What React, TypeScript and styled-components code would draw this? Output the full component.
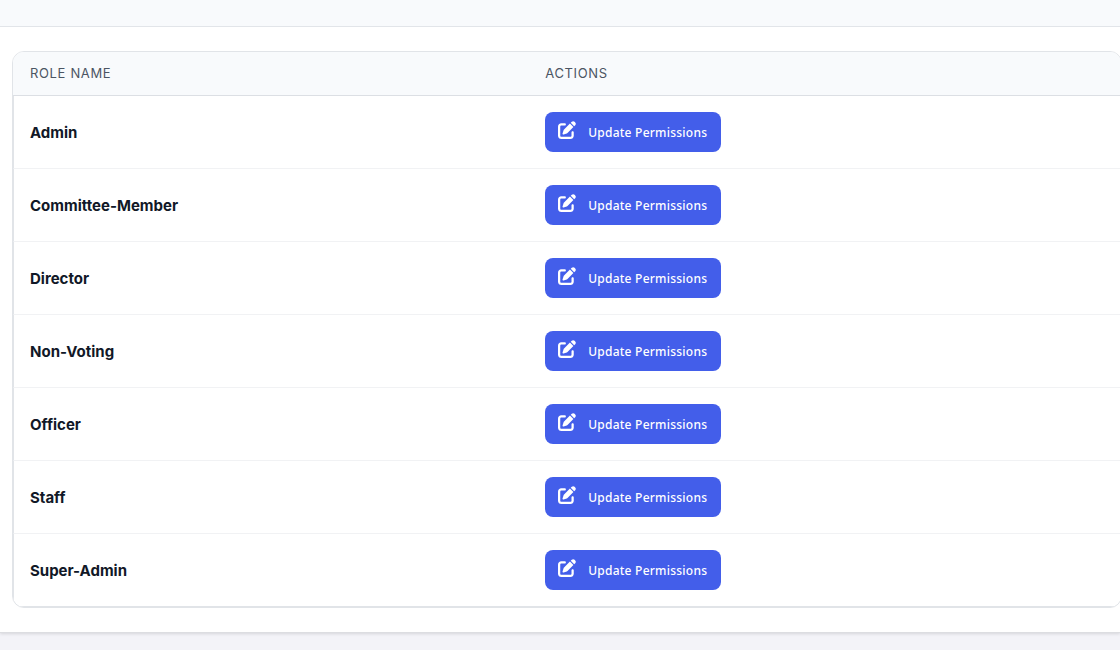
import React from 'react';
import styled, { createGlobalStyle } from 'styled-components';
import { FaPenToSquare } from 'react-icons/fa6';

const GlobalStyle = createGlobalStyle`
  *, *::before, *::after { box-sizing: border-box; }
  body {
    margin: 0;
    background: #f3f3f8;
    color: #111827;
    font-family: Inter, "Liberation Sans", sans-serif;
    overflow-x: hidden;
  }
`;

const Page = styled.main`
  padding-bottom: 17px;
  overflow: hidden;
`;

const Card = styled.section`
  background: #ffffff;
  border-bottom: 1px solid #dcdde1;
  box-shadow: 0 1px 3px rgba(0, 0, 0, 0.12);
`;

const CardHeader = styled.header`
  height: 27px;
  background: #f8fafc;
  border-bottom: 1px solid #e2e5e9;
`;

const CardBody = styled.div`
  padding: 24px 0 24px 12px;
  margin-right: -2px;
`;

const TableFrame = styled.div`
  border: 1px solid #e1e4e8;
  border-radius: 12px;
  overflow: hidden;
`;

const Table = styled.table`
  width: 100%;
  table-layout: fixed;
  border-collapse: separate;
  border-spacing: 0;
`;

const HeadCell = styled.th<{ $width?: string }>`
  width: ${({ $width }) => $width ?? 'auto'};
  height: 44px;
  padding: 0 17px 2px;
  background: #f8fafc;
  border-bottom: 1px solid #dcdfe4;
  color: #4b5563;
  font-size: 13px;
  font-weight: 400;
  line-height: 16px;
  letter-spacing: 0.05em;
  text-align: left;
  text-transform: uppercase;
`;

const Row = styled.tr`
  & > :first-child {
    border-left: 1px solid #e1e4e8;
  }
  & > * {
    border-bottom: 1px solid #f1f2f4;
  }
  &:last-child > * {
    border-bottom-color: #e1e4e8;
  }
`;

const NameCell = styled.th`
  height: 73px;
  padding: 2px 16px 0;
  font-size: 15px;
  font-weight: 700;
  line-height: 20px;
  text-align: left;
`;

const ActionCell = styled.td`
  height: 73px;
  padding: 0 17px;
`;

const UpdateButton = styled.button`
  display: flex;
  align-items: center;
  gap: 12px;
  height: 40px;
  padding: 2px 14px 0 13px;
  border: 0;
  border-radius: 8px;
  background: #435eea;
  color: #ffffff;
  font-family: "Noto Sans", "Open Sans", sans-serif;
  font-size: 12px;
  font-weight: 500;
  line-height: 20px;
  letter-spacing: 0.02em;
  white-space: nowrap;
  cursor: pointer;

  svg {
    width: 18px;
    height: 18px;
    margin-bottom: 6px;
  }
`;

const roles = ['Admin', 'Committee-Member', 'Director', 'Non-Voting', 'Officer', 'Staff', 'Super-Admin'];

export default function App() {
  return (
    <>
      <GlobalStyle />
      <Page>
        <Card>
          <CardHeader />
          <CardBody>
            <TableFrame>
              <Table>
                <thead>
                  <tr>
                    <HeadCell scope="col" $width="46.5%">Role Name</HeadCell>
                    <HeadCell scope="col">Actions</HeadCell>
                  </tr>
                </thead>
                <tbody>
                  {roles.map((role) => (
                    <Row key={role}>
                      <NameCell scope="row">{role}</NameCell>
                      <ActionCell>
                        <UpdateButton type="button">
                          <FaPenToSquare aria-hidden="true" />
                          Update Permissions
                        </UpdateButton>
                      </ActionCell>
                    </Row>
                  ))}
                </tbody>
              </Table>
            </TableFrame>
          </CardBody>
        </Card>
      </Page>
    </>
  );
}
